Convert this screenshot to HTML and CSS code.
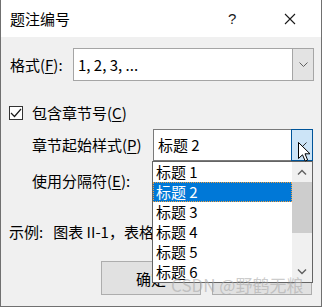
FILE: index.html
```html
<!DOCTYPE html>
<html lang="zh-CN">
<head>
    <meta charset="UTF-8">
    <meta name="viewport" content="width=device-width, initial-scale=1.0">
    <title>题注编号</title>
    <link rel="stylesheet" href="styles.css">
</head>
<body>

    <div class="window">
        <div class="titlebar">
            <span class="title">题注编号</span>
            <span class="help">?</span>
            <svg class="close" width="12" height="12" viewBox="0 0 12 12">
                <path d="M1 1 L11 11 M11 1 L1 11" stroke="#1a1a1a" stroke-width="1.1" fill="none"/>
            </svg>
        </div>

        <div class="content">
            <div class="row format-row">
                <span class="label">格式(<u>F</u>):</span>
                <div class="combo format-combo">
                    <span class="combo-text">1, 2, 3, ...</span>
                    <span class="combo-btn">
                        <svg width="9" height="6" viewBox="0 0 9 6"><path d="M0.5 0.5 L4.5 4.5 L8.5 0.5" stroke="#606060" fill="none"/></svg>
                    </span>
                </div>
            </div>

            <div class="row check-row">
                <span class="checkbox">
                    <svg width="12" height="10" viewBox="0 0 12 10"><path d="M1 5 L4.5 8.5 L11 1" stroke="#1a1a1a" stroke-width="1.2" fill="none"/></svg>
                </span>
                <span>包含章节号(<u>C</u>)</span>
            </div>

            <div class="row sub-row style-row">
                <span class="sub-label">章节起始样式(<u>P</u>)</span>
                <div class="combo style-combo">
                    <span class="combo-text">标题 2</span>
                    <span class="combo-btn hot">
                        <svg width="9" height="6" viewBox="0 0 9 6"><path d="M0.5 0.5 L4.5 4.5 L8.5 0.5" stroke="#303030" fill="none"/></svg>
                    </span>
                </div>
            </div>

            <div class="row sub-row sep-row">
                <span class="sub-label">使用分隔符(<u>E</u>):</span>
            </div>

            <div class="row example-row">示例:&nbsp;&nbsp;&nbsp;图表 II-1，表格 II-1</div>

            <div class="row button-row">
                <button class="btn">确定</button>
                <button class="btn"></button>
            </div>
        </div>

        <div class="droplist">
            <div class="items">
                <div class="item">标题 1</div>
                <div class="item selected">标题 2</div>
                <div class="item">标题 3</div>
                <div class="item">标题 4</div>
                <div class="item">标题 5</div>
                <div class="item">标题 6</div>
            </div>
            <div class="scrollbar">
                <svg class="arrow" width="10" height="6" viewBox="0 0 10 6"><path d="M1 5.5 L5 1.5 L9 5.5" stroke="#606060" stroke-width="1.4" fill="none"/></svg>
                <div class="thumb"></div>
                <div class="track"></div>
                <svg class="arrow" width="10" height="6" viewBox="0 0 10 6"><path d="M1 0.5 L5 4.5 L9 0.5" stroke="#606060" stroke-width="1.4" fill="none"/></svg>
            </div>
        </div>

        <svg class="cursor" width="13" height="20" viewBox="0 0 13 20">
            <path d="M0.5 0.5 L0.5 16.5 L4.5 12.8 L7.2 19 L9.6 18 L7 11.8 L12 11.8 Z" fill="#fff" stroke="#000" stroke-width="1"/>
        </svg>

        <div class="watermark">CSDN @野鹤无粮</div>
    </div>

</body>
</html>
```

FILE: styles.css
```css
body {
    margin: 0;
    font-family: "Noto Sans CJK SC", "Noto Sans", sans-serif;
    font-size: 15px;
    color: #000;
    background-color: #fff;
}
u {
    text-decoration-thickness: 1px;
    text-underline-offset: 2px;
}
.window {
    position: relative;
    width: 320px;
    height: 306px;
    border-left: 1px solid #707070;
    border-right: 1px solid #707070;
    border-bottom: 1px solid #707070;
    background-color: #f0f0f0;
    overflow: hidden;
}
.titlebar {
    display: flex;
    align-items: center;
    height: 37px;
    background-color: #fff;
}
.title {
    margin-left: 9px;
    line-height: 20px;
}
.help {
    margin-left: 158px;
    font-family: "Liberation Sans", sans-serif;
    font-size: 15px;
    color: #1a1a1a;
}
.close {
    margin-left: 48px;
}
.row {
    display: flex;
    align-items: center;
    line-height: 20px;
}
.format-row {
    margin-top: 11px;
    height: 33px;
}
.label {
    margin-left: 9px;
    width: 63px;
}
.combo {
    display: flex;
    align-items: stretch;
    box-sizing: border-box;
    background-color: #fff;
    border: 1px solid #a5a5a5;
}
.format-combo {
    width: 241px;
    height: 33px;
}
.combo-text {
    flex: 1;
    display: flex;
    align-items: center;
    padding-left: 4px;
}
.combo-btn {
    display: flex;
    align-items: center;
    justify-content: center;
    width: 20px;
    background-color: #e3e3e3;
    border-left: 1px solid #a5a5a5;
}
.combo-btn.hot {
    background-color: #cce4f7;
    border: 1px solid #005499;
    margin: -1px -1px -1px 0;
    width: 20px;
}
.check-row {
    margin-top: 23px;
    height: 18px;
}
.checkbox {
    display: flex;
    align-items: center;
    justify-content: center;
    box-sizing: border-box;
    width: 14px;
    height: 14px;
    margin-left: 8px;
    margin-right: 9px;
    border: 1px solid #333;
    background-color: #fff;
}
.sub-row .sub-label {
    margin-left: 31px;
    width: 121px;
}
.style-row {
    margin-top: 7px;
    height: 32px;
}
.style-combo {
    width: 160px;
    height: 32px;
    border-color: #7a7a7a;
}
.sep-row {
    margin-top: 10px;
    height: 20px;
}
.example-row {
    display: block;
    margin-top: 31px;
    margin-left: 8px;
    width: 143px;
    height: 20px;
    white-space: nowrap;
    overflow: hidden;
}
.button-row {
    margin-top: 19px;
    margin-left: 100px;
    gap: 11px;
}
.btn {
    box-sizing: border-box;
    width: 100px;
    height: 34px;
    font-family: inherit;
    font-size: 15px;
    background-color: #e1e1e1;
    border: 1px solid #adadad;
    padding: 0;
}
.droplist {
    position: absolute;
    left: 151px;
    top: 161px;
    box-sizing: border-box;
    width: 161px;
    height: 122px;
    display: flex;
    background-color: #fff;
    border: 1px solid #646464;
}
.items {
    flex: 1;
}
.item {
    height: 20px;
    line-height: 20px;
    padding-left: 3px;
    box-sizing: border-box;
}
.item.selected {
    background-color: #0078d7;
    color: #fff;
    outline: 1px dotted #f0a040;
    outline-offset: -1px;
}
.scrollbar {
    width: 20px;
    display: flex;
    flex-direction: column;
    align-items: center;
    background-color: #f0f0f0;
}
.arrow {
    margin: 7px 0;
}
.thumb {
    width: 20px;
    height: 51px;
    background-color: #cdcdcd;
}
.track {
    flex: 1;
}
.cursor {
    position: absolute;
    left: 297px;
    top: 142px;
}
.watermark {
    position: absolute;
    left: 170px;
    top: 274px;
    font-size: 17px;
    line-height: 22px;
    color: rgba(170, 170, 170, 0.6);
    white-space: nowrap;
}
```
